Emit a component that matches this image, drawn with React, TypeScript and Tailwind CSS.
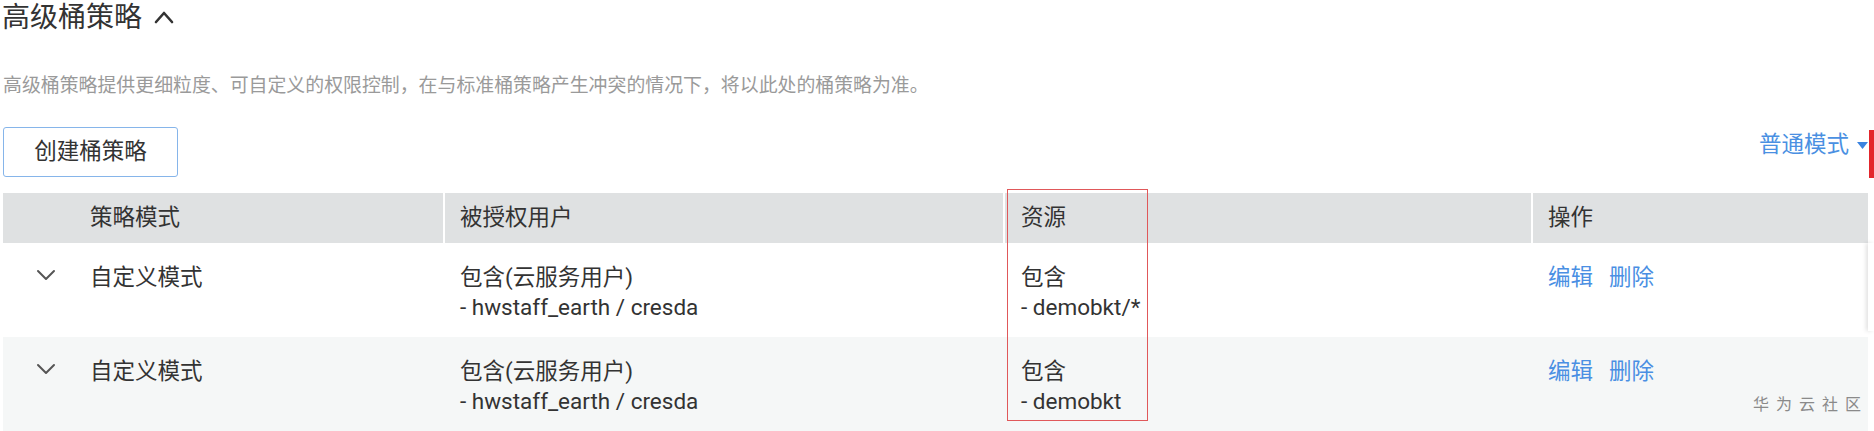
import React from "react";

const rows = [
  { res: "- demobkt/*", bg: "bg-white" },
  { res: "- demobkt", bg: "bg-[#f5f7f7]" },
];

function ChevronDown() {
  return (
    <svg width="20" height="12" viewBox="0 0 20 12" fill="none">
      <path d="M2 2 L10 10 L18 2" stroke="#555" strokeWidth="2" strokeLinecap="round" strokeLinejoin="round" />
    </svg>
  );
}

export default function App() {
  return (
    <div
      className="relative w-[1874px] h-[431px] overflow-hidden bg-white text-[#333]"
      style={{ fontFamily: 'Roboto, "Noto Sans CJK SC", sans-serif' }}
    >
      {/* Title */}
      <div className="h-[36px] pl-[2px] flex items-center gap-[12px]">
        <span className="text-[28px] leading-[36px] text-[#333]">高级桶策略</span>
        <svg width="20" height="14" viewBox="0 0 20 14" fill="none" className="mt-[-2px]">
          <path d="M2 12 L10 3 L18 12" stroke="#333" strokeWidth="2.6" strokeLinecap="round" strokeLinejoin="round" />
        </svg>
      </div>

      {/* Description */}
      <div className="mt-[37px] pl-[3px] text-[18.9px] leading-[26px] text-[#9a9a9a]">
        高级桶策略提供更细粒度、可自定义的权限控制，在与标准桶策略产生冲突的情况下，将以此处的桶策略为准。
      </div>

      {/* Button row */}
      <div className="mt-[28px] pl-[3px] pr-[6px] flex items-start justify-between">
        <button className="w-[175px] h-[50px] border border-[#86b5ea] rounded-[3px] bg-white text-[22.5px] text-[#333] flex items-center justify-center">
          创建桶策略
        </button>
        <div className="mt-[3px] h-[30px] flex items-center gap-[8px] text-[22.5px] text-[#4a90e2]">
          <span>普通模式</span>
          <svg width="11" height="7" viewBox="0 0 11 7">
            <path d="M0 0 L11 0 L5.5 7 Z" fill="#3a83e0" />
          </svg>
        </div>
      </div>

      {/* Table */}
      <div className="mt-[16px] ml-[3px] w-[1865px] text-[22.5px]">
        <div className="h-[50px] bg-[#dfe1e2] grid grid-cols-[442px_560px_528px_335px]">
          <div className="flex items-center pl-[87px] border-r-2 border-white">策略模式</div>
          <div className="flex items-center pl-[15px] border-r-2 border-white">被授权用户</div>
          <div className="flex items-center pl-[16px] border-r-2 border-white">资源</div>
          <div className="flex items-center pl-[15px]">操作</div>
        </div>
        {rows.map((r, i) => (
          <div key={i} className={`h-[94px] grid grid-cols-[442px_560px_528px_335px] ${r.bg}`}>
            <div className="flex items-start pt-[19px] leading-[30px]">
              <div className="w-[87px] h-[30px] flex items-center pl-[33px] mt-[-2px]">
                <ChevronDown />
              </div>
              <span>自定义模式</span>
            </div>
            <div className="pt-[19px] pl-[15px] leading-[30px]">
              <div>包含(云服务用户)</div>
              <div>- hwstaff_earth / cresda</div>
            </div>
            <div className="pt-[19px] pl-[16px] leading-[30px]">
              <div>包含</div>
              <div>{r.res}</div>
            </div>
            <div className="pt-[19px] pl-[15px] leading-[30px] flex gap-[16px] text-[#4a8fe3]">
              <span>编辑</span>
              <span>删除</span>
            </div>
          </div>
        ))}
      </div>

      {/* Annotation red box */}
      <div className="absolute left-[1007px] top-[189px] w-[141px] h-[232px] border border-[#e0585a]" />

      {/* Right-edge popup remnants */}
      <div className="absolute left-[1869px] top-[130px] w-[5px] h-[48px] bg-[#e3262c]" />
      <div className="absolute left-[1868px] top-[243px] w-[6px] h-[88px] bg-white shadow-[-2px_0_4px_rgba(0,0,0,0.12)]" />

      {/* Watermark */}
      <div className="absolute left-[1753px] top-[395px] text-[16px] leading-[20px] tracking-[7px] text-[#8a8a8a]">
        华为云社区
      </div>
    </div>
  );
}
